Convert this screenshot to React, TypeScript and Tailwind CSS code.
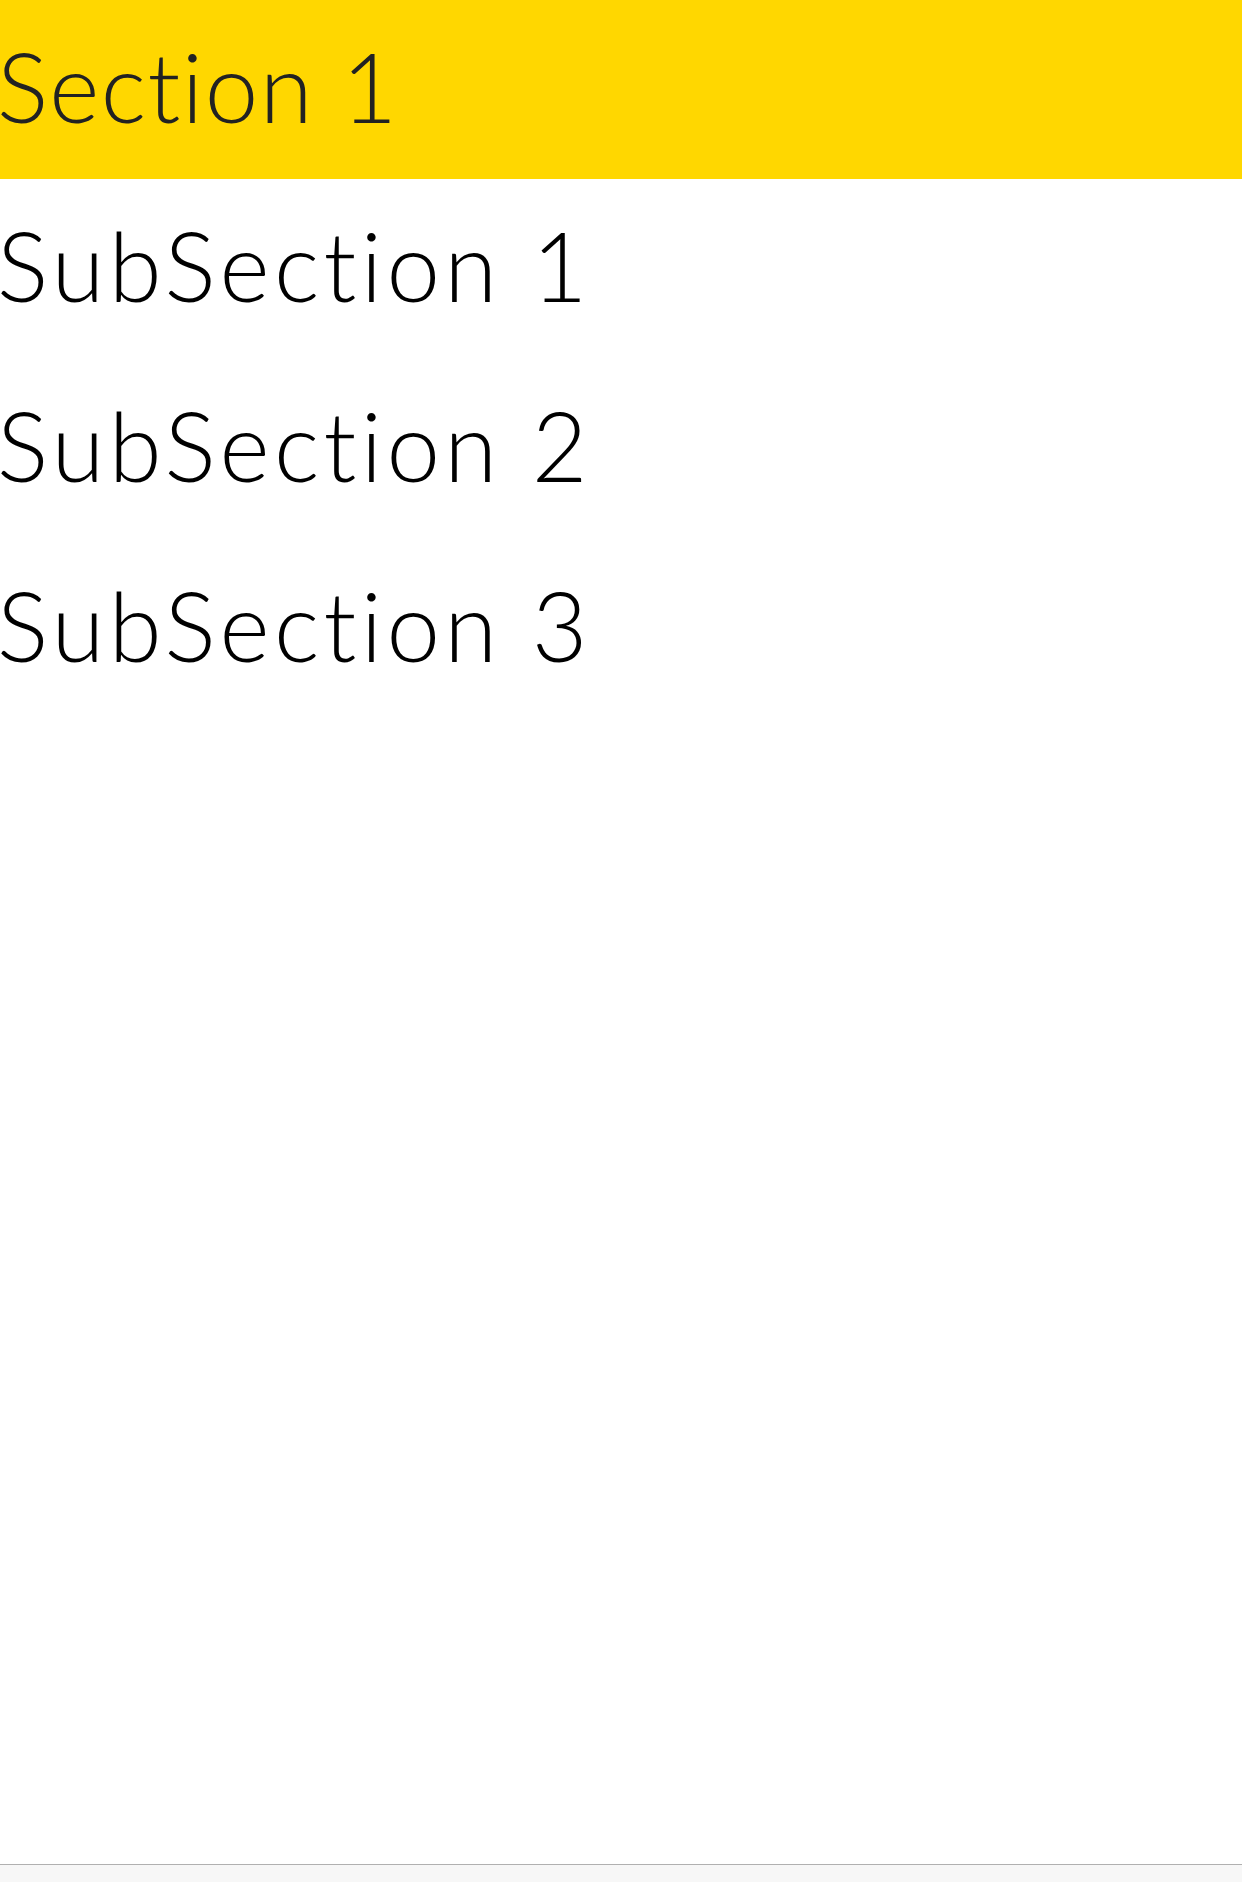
const ITEMS = ['SubSection 1', 'SubSection 2', 'SubSection 3'];

export default function App() {
  return (
    <div
      className="flex h-[1882px] w-[1242px] flex-col overflow-hidden bg-white"
      style={{ fontFamily: 'Lato, "Open Sans", sans-serif' }}
    >
      {/* Section header */}
      <div className="flex h-[179px] flex-shrink-0 items-center bg-[#ffd700] pb-[8px]">
        <span className="-ml-[3px] text-[96px] font-light leading-none tracking-[0.015em] text-[#222] [font-variant-ligatures:none]">
          Section 1
        </span>
      </div>

      {/* Subsections */}
      {ITEMS.map(label => (
        <div key={label} className="flex h-[180px] flex-shrink-0 items-center pb-[8px]">
          <span className="-ml-[3px] text-[96px] font-light leading-none tracking-[0.045em] text-black [font-variant-ligatures:none]">
            {label}
          </span>
        </div>
      ))}

      <div className="flex-1" />

      {/* Bottom bar */}
      <div className="h-[18px] flex-shrink-0 border-t border-[#b0b0b0] bg-[#f7f7f7]" />
    </div>
  );
}
